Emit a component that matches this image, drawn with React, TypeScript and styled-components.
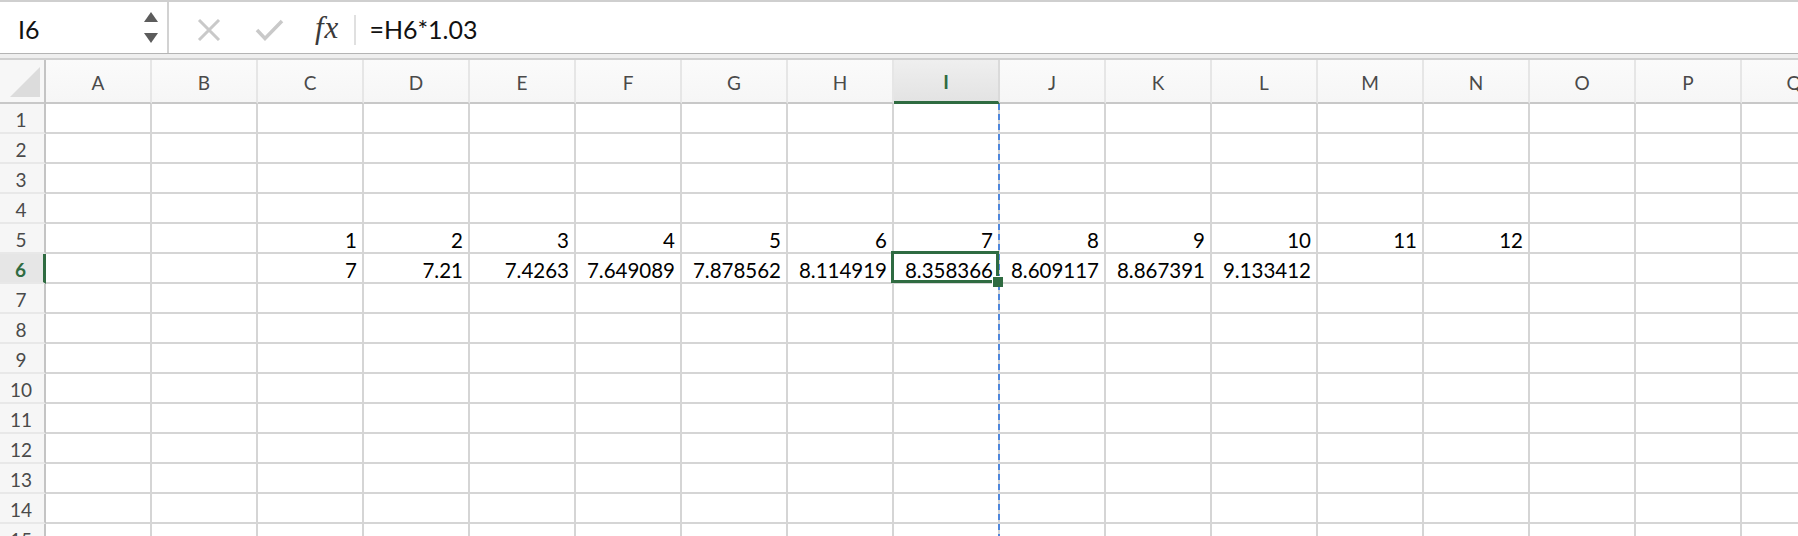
import React from 'react';
import styled, { createGlobalStyle } from 'styled-components';

const ROW_HEAD_W = 46;
const COL_W = 106;
const HEAD_H = 44;
const ROW_H = 30;
const COLS = 'ABCDEFGHIJKLMNOPQ'.split('');
const ROW_COUNT = 15;
const SEL_COL = 'I';
const SEL_ROW = 6;
const GREEN = '#2f6b41';

const values: Record<string, string> = {
  C5: '1', D5: '2', E5: '3', F5: '4', G5: '5', H5: '6', I5: '7', J5: '8', K5: '9', L5: '10', M5: '11', N5: '12',
  C6: '7', D6: '7.21', E6: '7.4263', F6: '7.649089', G6: '7.878562', H6: '8.114919', I6: '8.358366',
  J6: '8.609117', K6: '8.867391', L6: '9.133412',
};

const GlobalStyle = createGlobalStyle`
  html, body {
    margin: 0;
    padding: 0;
    background: #fff;
  }
  body {
    font-family: Lato, 'Liberation Sans', sans-serif;
  }
`;

const Page = styled.div`
  width: 1798px;
  height: 536px;
  overflow: hidden;
  display: flex;
  flex-direction: column;
  & > * {
    flex-shrink: 0;
  }
`;

const Toolbar = styled.div`
  display: flex;
  height: 54px;
  box-sizing: border-box;
  border-top: 2px solid #cfcfcf;
  border-bottom: 1px solid #b4b4b4;
  background: #fff;
`;

const NameBox = styled.div`
  width: 169px;
  box-sizing: border-box;
  border-right: 2px solid #d2d2d2;
  display: flex;
  align-items: center;
  justify-content: space-between;
  padding: 3px 9px 0 18px;
  font-size: 25px;
  color: #111;
`;

const Spinner = styled.div`
  display: flex;
  flex-direction: column;
  gap: 11px;
  margin-top: -3px;
`;

const Arrow = styled.div<{ $down?: boolean }>`
  width: 0;
  height: 0;
  border-left: 7px solid transparent;
  border-right: 7px solid transparent;
  ${(p) => (p.$down ? 'border-top: 10px solid #5c5c5c;' : 'border-bottom: 10px solid #5c5c5c;')}
`;

const FormulaArea = styled.div`
  flex: 1;
  display: flex;
  align-items: center;
  padding-left: 28px;
`;

const IconSlot = styled.div<{ $gap?: number }>`
  display: flex;
  align-items: center;
  margin-left: ${(p) => p.$gap ?? 0}px;
  margin-top: 4px;
`;

const FxLabel = styled.span`
  margin-left: 31px;
  font-family: 'Liberation Serif', 'DejaVu Serif', serif;
  font-style: italic;
  font-size: 31px;
  color: #3a3a3a;
  letter-spacing: 1px;
`;

const FormulaDivider = styled.div`
  width: 2px;
  height: 30px;
  margin-left: 15px;
  background: #e0e0e0;
  margin-top: 4px;
`;

const FormulaText = styled.span`
  margin-left: 13px;
  font-size: 25px;
  color: #111;
  padding-top: 3px;
`;

const Strip = styled.div`
  height: 4px;
  background: #efefef;
  border-bottom: 2px solid #d0d0d0;
`;

const Grid = styled.div`
  position: relative;
  display: grid;
  grid-template-columns: ${ROW_HEAD_W}px repeat(${COLS.length}, ${COL_W}px);
  grid-template-rows: ${HEAD_H}px repeat(${ROW_COUNT}, ${ROW_H}px);
`;

const Corner = styled.div`
  box-sizing: border-box;
  background: #f7f7f7;
  border-right: 2px solid #c4c4c4;
  border-bottom: 2px solid #c8c8c8;
  display: flex;
  justify-content: flex-end;
  align-items: flex-end;
  padding: 0 4px 5px 0;
`;

const CornerTriangle = styled.div`
  width: 30px;
  height: 30px;
  background: #dcdcdc;
  clip-path: polygon(100% 0, 100% 100%, 0 100%);
`;

const ColHeader = styled.div<{ $active?: boolean }>`
  box-sizing: border-box;
  display: flex;
  align-items: center;
  justify-content: center;
  font-size: 19px;
  padding-top: 2px;
  border-right: 2px solid ${(p) => (p.$active ? '#dadada' : '#e6e6e6')};
  border-bottom: ${(p) => (p.$active ? `3px solid ${GREEN}` : '2px solid #c8c8c8')};
  background: ${(p) =>
    p.$active ? 'linear-gradient(#efefef, #e3e3e3)' : 'linear-gradient(#fbfbfb, #f6f6f6)'};
  color: ${(p) => (p.$active ? GREEN : '#4a4a4a')};
  font-weight: ${(p) => (p.$active ? 700 : 400)};
`;

const RowHeader = styled.div<{ $active?: boolean }>`
  box-sizing: border-box;
  display: flex;
  align-items: center;
  justify-content: center;
  font-size: 19px;
  padding: 2px 2px 0 0;
  border-right: ${(p) => (p.$active ? `3px solid ${GREEN}` : '2px solid #c4c4c4')};
  border-bottom: 2px solid #e8e8e8;
  background: ${(p) => (p.$active ? '#e6e6e6' : '#f6f6f6')};
  color: ${(p) => (p.$active ? GREEN : '#4a4a4a')};
  font-weight: ${(p) => (p.$active ? 700 : 400)};
`;

const Cell = styled.div`
  position: relative;
  box-sizing: border-box;
  border-right: 2px solid #d5d5d5;
  border-bottom: 2px solid #d5d5d5;
  display: flex;
  align-items: center;
  justify-content: flex-end;
  padding: 3px 5px 0 0;
  font-size: 20.5px;
  color: #000;
  white-space: nowrap;
`;

const SelectionBox = styled.div`
  position: absolute;
  z-index: 2;
  top: -3px;
  left: -3px;
  right: -1px;
  bottom: -1px;
  border: 3px solid ${GREEN};
  pointer-events: none;
`;

const FillHandle = styled.div`
  position: absolute;
  z-index: 3;
  right: -5px;
  bottom: -5px;
  width: 11px;
  height: 11px;
  box-sizing: border-box;
  background: ${GREEN};
  border-left: 1px solid #fff;
  border-top: 1px solid #fff;
`;

const PageBreak = styled.div<{ $left: number }>`
  position: absolute;
  z-index: 1;
  top: ${HEAD_H}px;
  bottom: 0;
  left: ${(p) => p.$left}px;
  width: 2px;
  background: repeating-linear-gradient(to bottom, #4f87dc 0 6px, transparent 6px 10px);
`;

const CancelIcon = () => (
  <svg width="24" height="22" viewBox="0 0 24 22">
    <path d="M2 1 L22 21 M22 1 L2 21" stroke="#c9c9c9" strokeWidth="3" fill="none" />
  </svg>
);

const ConfirmIcon = () => (
  <svg width="29" height="22" viewBox="0 0 29 22">
    <path d="M2 11 L10 19.5 L27 2" stroke="#c9c9c9" strokeWidth="3.5" fill="none" />
  </svg>
);

export default function App() {
  const rows = Array.from({ length: ROW_COUNT }, (_, i) => i + 1);
  const selIdx = COLS.indexOf(SEL_COL);
  return (
    <>
      <GlobalStyle />
      <Page>
        <Toolbar>
          <NameBox>
            <span>I6</span>
            <Spinner>
              <Arrow />
              <Arrow $down />
            </Spinner>
          </NameBox>
          <FormulaArea>
            <IconSlot>
              <CancelIcon />
            </IconSlot>
            <IconSlot $gap={34}>
              <ConfirmIcon />
            </IconSlot>
            <FxLabel>fx</FxLabel>
            <FormulaDivider />
            <FormulaText>=H6*1.03</FormulaText>
          </FormulaArea>
        </Toolbar>
        <Strip />
        <Grid>
          <Corner>
            <CornerTriangle />
          </Corner>
          {COLS.map((c) => (
            <ColHeader key={c} $active={c === SEL_COL}>
              {c}
            </ColHeader>
          ))}
          {rows.map((r) => (
            <React.Fragment key={r}>
              <RowHeader $active={r === SEL_ROW}>{r}</RowHeader>
              {COLS.map((c) => {
                const selected = c === SEL_COL && r === SEL_ROW;
                return (
                  <Cell key={c + r}>
                    {values[c + r]}
                    {selected && (
                      <>
                        <SelectionBox />
                        <FillHandle />
                      </>
                    )}
                  </Cell>
                );
              })}
            </React.Fragment>
          ))}
          <PageBreak $left={ROW_HEAD_W + (selIdx + 1) * COL_W - 2} />
        </Grid>
      </Page>
    </>
  );
}
